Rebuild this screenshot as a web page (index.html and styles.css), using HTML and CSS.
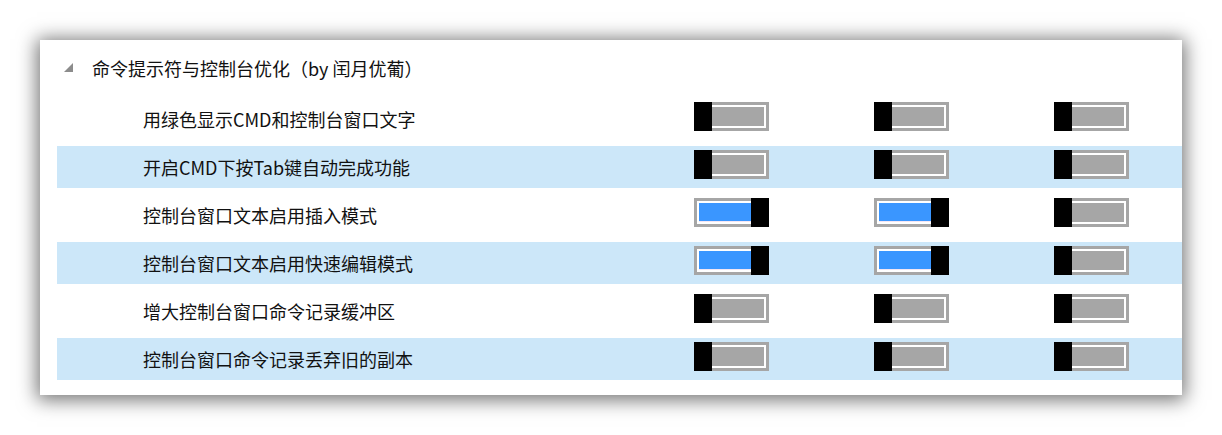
FILE: index.html
```html
<!DOCTYPE html>
<html lang="zh-CN">
  <head>
    <meta charset="UTF-8" />
    <title>命令提示符与控制台优化</title>
    <link rel="stylesheet" href="styles.css">
  </head>
  <body>
    <div class="panel">
      <div class="group-header">
        <svg class="expander" width="9" height="9" viewBox="0 0 9 9">
          <polygon points="9,0 9,9 0,9" fill="#8c8c8c" />
        </svg>
        <span class="group-title">命令提示符与控制台优化（by 闰月优葡）</span>
      </div>

      <div class="option-list">
        <div class="option-row">
          <span class="option-label">用绿色显示CMD和控制台窗口文字</span>
          <div class="toggle"><div class="toggle-knob"></div></div>
          <div class="toggle"><div class="toggle-knob"></div></div>
          <div class="toggle"><div class="toggle-knob"></div></div>
        </div>
        <div class="option-row alt">
          <span class="option-label">开启CMD下按Tab键自动完成功能</span>
          <div class="toggle"><div class="toggle-knob"></div></div>
          <div class="toggle"><div class="toggle-knob"></div></div>
          <div class="toggle"><div class="toggle-knob"></div></div>
        </div>
        <div class="option-row">
          <span class="option-label">控制台窗口文本启用插入模式</span>
          <div class="toggle on"><div class="toggle-knob"></div></div>
          <div class="toggle on"><div class="toggle-knob"></div></div>
          <div class="toggle"><div class="toggle-knob"></div></div>
        </div>
        <div class="option-row alt">
          <span class="option-label">控制台窗口文本启用快速编辑模式</span>
          <div class="toggle on"><div class="toggle-knob"></div></div>
          <div class="toggle on"><div class="toggle-knob"></div></div>
          <div class="toggle"><div class="toggle-knob"></div></div>
        </div>
        <div class="option-row">
          <span class="option-label">增大控制台窗口命令记录缓冲区</span>
          <div class="toggle"><div class="toggle-knob"></div></div>
          <div class="toggle"><div class="toggle-knob"></div></div>
          <div class="toggle"><div class="toggle-knob"></div></div>
        </div>
        <div class="option-row alt">
          <span class="option-label">控制台窗口命令记录丢弃旧的副本</span>
          <div class="toggle"><div class="toggle-knob"></div></div>
          <div class="toggle"><div class="toggle-knob"></div></div>
          <div class="toggle"><div class="toggle-knob"></div></div>
        </div>
      </div>
    </div>
  </body>
</html>
```

FILE: styles.css
```css
* {
  margin: 0;
  padding: 0;
  box-sizing: border-box;
}

html,
body {
  height: 100%;
}

body {
  font-family: "Noto Sans CJK SC", "Noto Sans", sans-serif;
  background: #ffffff;
  color: #111111;
  padding: 40px 0 0 40px;
}

.panel {
  width: 1142px;
  height: 355px;
  background: #ffffff;
  box-shadow: 0 2px 18px 3px rgba(0, 0, 0, 0.55);
  padding: 0 0 9px 17px;
}

.group-header {
  height: 58px;
  display: flex;
  align-items: center;
  padding-left: 7px;
}

.expander {
  margin-top: -4px;
}

.group-title {
  font-size: 18px;
  margin-left: 19px;
  margin-top: -2px;
}

.option-list {
  display: flex;
  flex-direction: column;
  gap: 6px;
}

.option-row {
  height: 42px;
  display: grid;
  grid-template-columns: 637px 180px 180px 1fr;
  align-items: start;
}

.option-row.alt {
  background: #cce7f9;
}

.option-label {
  font-size: 18px;
  line-height: 42px;
  padding-left: 86px;
  white-space: nowrap;
}

.toggle {
  position: relative;
  width: 75px;
  height: 29px;
  margin-top: 4px;
  border: 3px solid #a6a6a6;
  background: #a6a6a6;
  box-shadow: inset 0 0 0 2px #ffffff;
}

.toggle.on {
  background: #3a96ff;
}

.toggle.on::after {
  content: "";
  position: absolute;
  left: 2px;
  right: 15px;
  bottom: 2px;
  height: 1px;
  background: #f4e6f4;
}

.toggle-knob {
  position: absolute;
  top: -3px;
  left: -3px;
  width: 18px;
  height: 29px;
  background: #000000;
}

.toggle.on .toggle-knob {
  left: auto;
  right: -3px;
}
```
